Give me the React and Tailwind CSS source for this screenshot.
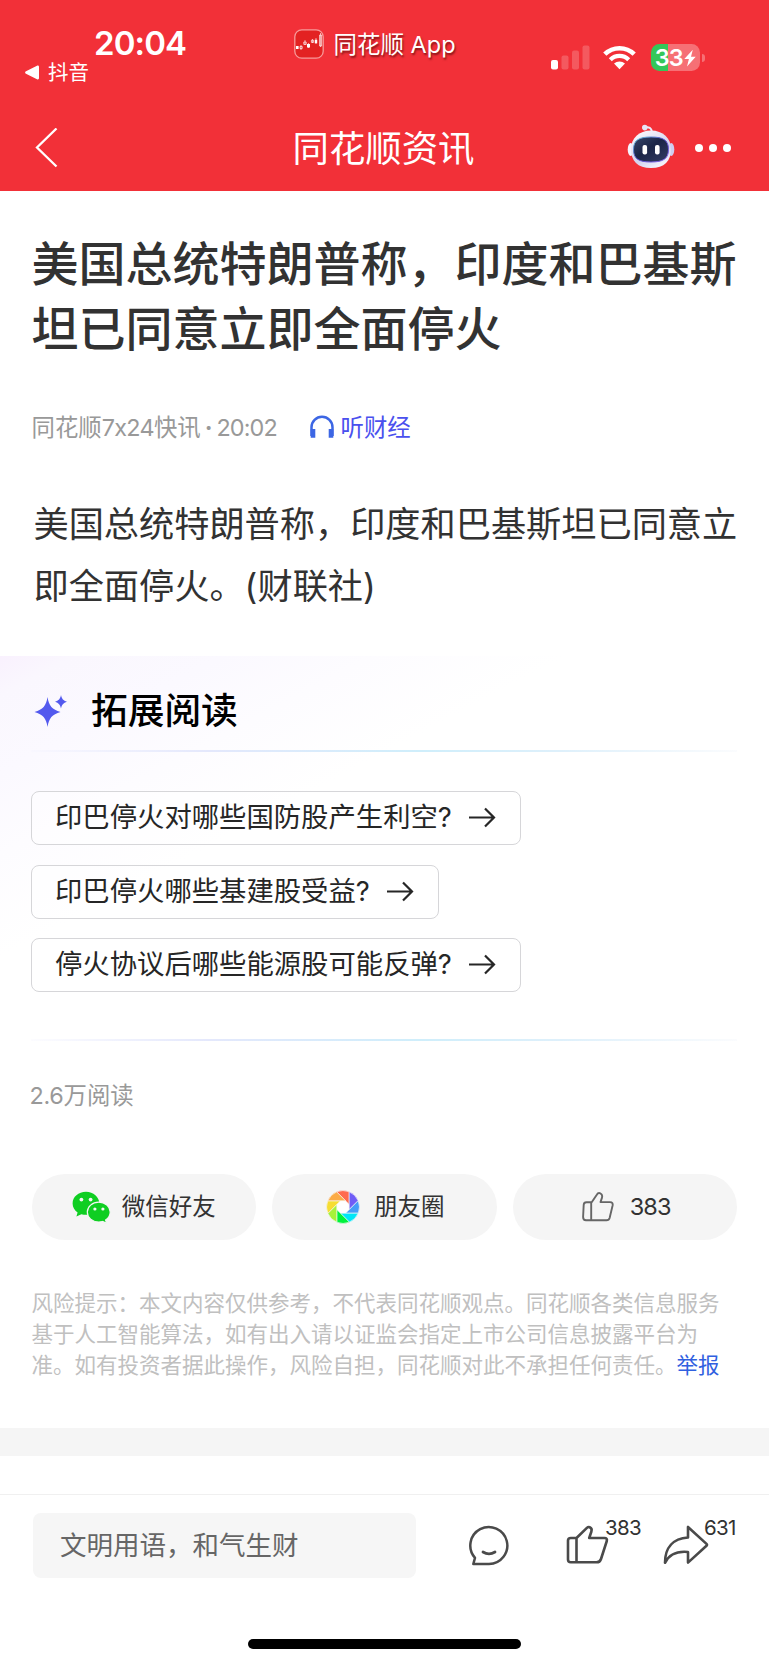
import React from 'react';

const questions = [
  { id: 1, text: '印巴停火对哪些国防股产生利空?' },
  { id: 2, text: '印巴停火哪些基建股受益?' },
  { id: 3, text: '停火协议后哪些能源股可能反弹?' },
];

const apertureBlades = [
  { color: '#ff6b4f', angle: 0 },
  { color: '#6f5cf6', angle: 45 },
  { color: '#459df8', angle: 90 },
  { color: '#00e6f6', angle: 135 },
  { color: '#00f23c', angle: 180 },
  { color: '#a6f23a', angle: 225 },
  { color: '#f6dd33', angle: 270 },
  { color: '#fcab45', angle: 315 },
];

const AppLogo = () => (
  <svg className="h-[30px] w-[30px]" viewBox="0 0 30 30" fill="none">
    <rect x="0.8" y="0.8" width="28.4" height="28.4" rx="7" fill="#e32222" stroke="#f79a9a" strokeWidth="1.3" />
    <path d="M7 16v5M11 11v5M14.5 14v5M18.5 10v4M22 9v6M26.5 4v14" stroke="#fff" strokeWidth="0.6" />
    <path d="M2 17h2.6v3H2zM13 15h3v3.4h-3zM20.8 10.8h2.4v3.4h-2.4z" fill="#fff" />
    <path d="M6 17.4h2.2v2.2H6zM9.8 13h2.4v2.4H9.8zM17.4 11.2h2.2v2.2h-2.2zM25.6 6h2v11h-2z" stroke="#fff" strokeWidth="0.7" />
  </svg>
);

const SignalIcon = () => (
  <svg className="h-[25px] w-[39px]" viewBox="0 0 39 25" fill="#fff">
    <rect x="0" y="15" width="7" height="9.5" rx="2" />
    <rect x="10.5" y="10.5" width="7" height="14" rx="2" opacity="0.2" />
    <rect x="21" y="5.5" width="7" height="19" rx="2" opacity="0.2" />
    <rect x="31.5" y="0.5" width="7" height="24" rx="2" opacity="0.2" />
  </svg>
);

const WifiIcon = () => (
  <svg className="h-[25px] w-[33px]" viewBox="0 0 33 25">
    <path d="M1.8 9.2a21 21 0 0 1 29.4 0" fill="none" stroke="#fff" strokeWidth="4.6" />
    <path d="M7.3 14.7a13.2 13.2 0 0 1 18.4 0" fill="none" stroke="#fff" strokeWidth="4.3" />
    <path d="M11 18.6a8 8 0 0 1 11 0l-5.5 5.6z" fill="#fff" />
  </svg>
);

const Battery = () => (
  <div className="flex items-center">
    <div className="flex h-[27px] w-[48.5px] items-center justify-center overflow-hidden rounded-[8.5px] bg-[linear-gradient(to_right,#34c759_0,#34c759_16.5px,#f67075_16.5px)] text-white">
      <span className="text-[23.5px] font-semibold leading-none tracking-[-1px]">33</span>
      <svg className="ml-[1px] h-[18px] w-[12px]" viewBox="0 0 12 18" fill="#fff">
        <path d="M8.8 0.8L0.3 10h4.6L3 17.4 11.7 7.8H7z" />
      </svg>
    </div>
    <div className="ml-[2px] h-[8px] w-[3px] rounded-r-full bg-[#f67075]" />
  </div>
);

const RobotIcon = () => (
  <svg className="h-[46px] w-[48px]" viewBox="0 0 48 46">
    <defs>
      <linearGradient id="shell" x1="0" y1="0" x2="0.6" y2="1">
        <stop offset="0" stopColor="#ffffff" />
        <stop offset="0.7" stopColor="#d3d2ee" />
        <stop offset="1" stopColor="#f2f1fb" />
      </linearGradient>
      <linearGradient id="visor" x1="0" y1="0" x2="1" y2="1">
        <stop offset="0" stopColor="#37466b" />
        <stop offset="0.45" stopColor="#1b2547" />
        <stop offset="1" stopColor="#343d64" />
      </linearGradient>
      <linearGradient id="rim" x1="0" y1="0" x2="1" y2="1">
        <stop offset="0" stopColor="#6ad2dc" />
        <stop offset="0.5" stopColor="#5346c9" />
        <stop offset="1" stopColor="#8c6cf0" />
      </linearGradient>
    </defs>
    <path d="M18 3.5c4-.8 6.5.2 7 4.5" fill="none" stroke="#eceafa" strokeWidth="2" />
    <circle cx="17.8" cy="3.6" r="2.8" fill="#e6e5f7" />
    <ellipse cx="3.7" cy="25.5" rx="3" ry="6.5" fill="#f5f4ff" />
    <ellipse cx="44.3" cy="25.5" rx="3" ry="6.5" fill="#cfcdf0" />
    <path d="M24 6.5c12 0 20 7.8 20 18.5 0 12-6.5 19-20 19S4 37 4 25C4 14.3 12 6.5 24 6.5z" fill="url(#shell)" />
    <path d="M24 13c12 0 17.5 3 17.5 12.5S36 38 24 38 6.500 35 6.500 25.500 12 13 24 13z" fill="url(#visor)" stroke="url(#rim)" strokeWidth="1" />
    <rect x="15.5" y="21" width="4.6" height="9.5" rx="2" fill="#fff" />
    <rect x="28" y="21" width="4.6" height="9.5" rx="2" fill="#fff" />
  </svg>
);

const WechatIcon = () => (
  <svg className="h-[33px] w-[39px]" viewBox="0 0 39 33">
    <path d="M14 .8C6.400.8.600 6 .600 12.400c0 3.700 1.900 6.900 5 9l-1.200 4.200 5-2.400c1.500.4 3 .6 4.600.6 7.400 0 13.300-5.100 13.300-11.400S21.400.8 14 .8z" fill="#0fce22" />
    <circle cx="9.4" cy="8.6" r="1.9" fill="#f5f5f5" />
    <circle cx="18.6" cy="8.6" r="1.9" fill="#f5f5f5" />
    <path d="M26.800 11.200c-6.500 0-11.500 4.400-11.500 9.900s5 9.900 11.500 9.900c1.300 0 2.600-.2 3.800-.5l4 1.900-1-3.300c2.900-1.900 4.600-4.700 4.600-8 0-5.500-5-9.900-11.400-9.900z" fill="#0fce22" stroke="#f5f5f5" strokeWidth="1.2" />
    <circle cx="22.9" cy="18" r="1.6" fill="#f5f5f5" />
    <circle cx="30.9" cy="18" r="1.6" fill="#f5f5f5" />
  </svg>
);

const MomentsIcon = () => (
  <svg className="h-[34px] w-[34px]" viewBox="-17 -17 34 34">
    <circle r="8" fill="#fff" />
    {apertureBlades.map((blade) => (
      <path
        key={blade.angle}
        d="M6.2 -2.57L6.2 -15.2A16.4 16.4 0 0 0 -6.36 -15.13Z"
        transform={`rotate(${blade.angle})`}
        fill={blade.color}
        stroke="#f7f7f7"
        strokeWidth="0.6"
      />
    ))}
  </svg>
);

const LikeOutline = () => (
  <svg className="h-[30px] w-[32px]" viewBox="0 0 32 30" fill="none" stroke="#666" strokeWidth="1.9" strokeLinejoin="round">
    <path d="M9.7 10.2H4.5c-2 0-2.7 1-2.8 2.5L1.1 25c0 2.3.9 3.300 2.900 3.300h20.500c1.700 0 2.700-.8 3.100-2.300l3-12.500c.4-2.200-.4-3.400-2.500-3.400h-9.600l1.500-4.500c.5-2.200-.2-3.700-1.700-4.300-1.400-.5-2.700 0-3.500 1.400L9.700 10.200zM9.200 10.200v18" />
  </svg>
);

const LikeIcon = () => (
  <svg className="h-[40px] w-[43px]" viewBox="0 0 43 40" fill="none" stroke="#4a4a4a" strokeWidth="2.6" strokeLinejoin="round">
    <path d="M10.500 13H4.800C2.800 13 2 13.900 2 15.600V34.500c0 1.900.9 2.800 2.800 2.800H30.500c2.300 0 3.800-1 4.500-3.300l5.800-18c.5-2-.3-3-2.300-3H23.200l2.200-6.500c.6-2-.2-3.700-1.700-4.300-1-.4-2-.1-2.800.7zM10.500 13v24.300" />
  </svg>
);

const CommentIcon = () => (
  <svg className="h-[42px] w-[42px]" viewBox="0 0 42 42" fill="none" stroke="#4a4a4a" strokeWidth="2.5" strokeLinecap="round" strokeLinejoin="round">
    <path d="M5.300 40l1.700-6.200A18.500 18.500 0 1 1 21 40z" />
    <path d="M15 28q6 3.800 12 0" strokeWidth="2.8" />
  </svg>
);

const ShareIcon = () => (
  <svg className="h-[40px] w-[46px]" viewBox="0 0 46 40" fill="none" stroke="#4a4a4a" strokeWidth="2.6" strokeLinejoin="round">
    <path d="M25 2v10.500C10 13.500 2 22.500 2 37.800c4.500-9 12-11.900 23-10.800v10.600L43.500 20.800c.7-.7.700-1.200 0-1.900z" />
  </svg>
);

const Divider = () => (
  <div className="h-[2px] bg-[linear-gradient(to_right,rgba(240,240,255,0.2),#e4e8fc_25%,#cfeefb_55%,#def0fb_75%,rgba(240,244,250,0.3))]" />
);

const App = () => {
  return (
    <div className="flex h-[1665px] w-[769px] flex-col overflow-hidden bg-white font-['Inter','Noto_Sans_CJK_SC',sans-serif] text-[#323232]">
      {/* Header */}
      <header className="h-[191px] shrink-0 bg-[#f23038] text-white">
        <div className="flex h-[100px] justify-between">
          <div className="w-[200px] pt-[26px]">
            <div className="pl-[94px] text-[33px] font-semibold leading-[34px] tracking-[-0.9px]">20:04</div>
            <div className="flex h-[25px] items-center gap-[8px] pl-[25px]">
              <svg className="h-[15px] w-[15px]" viewBox="0 0 15 15" fill="#fff">
                <path d="M1 6.3L12 .8c1.2-.6 2 0 2 1.2v11c0 1.2-.8 1.8-2 1.2L1 8.7C-.2 8-.2 7 1 6.3z" />
              </svg>
              <span className="text-[20.5px] leading-[25px]">抖音</span>
            </div>
          </div>
          <div className="flex h-[88px] w-[250px] items-center gap-[10px] pl-[43px]">
            <AppLogo />
            <span className="whitespace-nowrap pt-[2px] text-[23.5px] leading-[30px] [text-shadow:1px_2px_2px_rgba(60,0,0,0.6)]">同花顺 App</span>
          </div>
          <div className="flex h-[115px] w-[218px] items-center">
            <SignalIcon />
            <div className="ml-[13px]"><WifiIcon /></div>
            <div className="ml-[15px]"><Battery /></div>
          </div>
        </div>
        <div className="flex h-[91px] items-center pl-[35px] pr-[38px] pt-[5px]">
          <div className="flex w-[200px] items-center">
            <svg className="h-[40px] w-[23px]" viewBox="0 0 23 40" fill="none" stroke="#fff" strokeWidth="2.3">
              <path d="M21.5 0.500L2 19.500 21.5 38.500" />
            </svg>
          </div>
          <h1 className="flex-1 pl-[1px] pt-[2px] text-center text-[36.4px] leading-[50px]">同花顺资讯</h1>
          <div className="flex w-[200px] items-center justify-end gap-[20px]">
            <div className="-mt-[3px]"><RobotIcon /></div>
            <div className="flex gap-[6px]">
              <span className="h-[8px] w-[8px] rounded-full bg-white" />
              <span className="h-[8px] w-[8px] rounded-full bg-white" />
              <span className="h-[8px] w-[8px] rounded-full bg-white" />
            </div>
          </div>
        </div>
      </header>

      {/* Article */}
      <article className="h-[465px] shrink-0 pl-[31.5px] pt-[40px]">
        <h2 className="whitespace-nowrap text-[47px] font-medium leading-[65px]">
          美国总统特朗普称，印度和巴基斯<br />坦已同意立即全面停火
        </h2>
        <div className="mt-[51px] flex h-[32px] items-center text-[23.4px] leading-[32px] text-[#999]">
          <div className="flex w-[277px] items-center whitespace-nowrap">
            <span>同花顺</span>
            <span className="tracking-[-0.7px]">7x24</span>
            <span>快讯</span>
            <span className="mx-[4px] font-bold">·</span>
            <span className="tracking-[-0.9px]">20:02</span>
          </div>
          <svg className="-mt-[2px] h-[24px] w-[26px]" viewBox="0 0 26 24" fill="none" stroke="#3c66e4">
            <path d="M2.5 21V12.3a10.5 10.5 0 0 1 21 0V21" strokeWidth="2.5" />
            <path d="M4 14v8.8M22 14v8.8" strokeWidth="4.6" />
          </svg>
          <span className="ml-[6px] text-[#4a50ee]">听财经</span>
        </div>
        <p className="mt-[49px] whitespace-nowrap pl-[2px] text-[35.2px] leading-[62px]">
          美国总统特朗普称，印度和巴基斯坦已同意立<br />即全面停火。(财联社)
        </p>
      </article>

      {/* Further reading */}
      <section className="h-[385px] shrink-0 bg-[linear-gradient(152deg,#f9f1fe_0,#faf7fe_5%,#fbf9ff_15%,#fdfcff_25%,#ffffff_38%)] pl-[31px] pr-[32px]">
        <div className="flex h-[94px] items-center pt-[14px]">
          <svg className="h-[33px] w-[36px]" viewBox="0 0 36 33" fill="#5359ee">
            <path d="M16.5 3c1.5 9 4.5 12.500 13 15-8.500 2.500-11.500 6-13 15C15 24 12 20.500 3.500 18 12 15.500 15 12 16.500 3z" />
            <path d="M30 1c.8 4 2.300 5.500 6 6.700-3.700 1.300-5.200 2.800-6 6.800-.8-4-2.300-5.500-6-6.800C27.700 6.500 29.200 5 30 1z" />
          </svg>
          <h3 className="ml-[24px] pt-[1px] text-[36.7px] font-medium leading-[48px] text-black">拓展阅读</h3>
        </div>
        <Divider />
        <div className="flex flex-col items-start gap-[19.5px] pb-[47px] pt-[39px]">
          {questions.map((question) => (
            <button
              key={question.id}
              className="flex h-[54px] items-center gap-[16px] whitespace-nowrap rounded-[8px] border border-[#d6d6d9] bg-white/40 pl-[23px] pr-[24px] text-[27.35px] leading-[40px] text-[#262626]"
            >
              {question.text}
              <svg className="h-[22px] w-[28px]" viewBox="0 0 28 22" fill="none" stroke="#262626" strokeWidth="2.2">
                <path d="M1 10.5h25M17 1.5l9 9-9 9" />
              </svg>
            </button>
          ))}
        </div>
        <Divider />
      </section>

      {/* Read count */}
      <div className="h-[133px] shrink-0 pl-[29.5px] pt-[39px] text-[23.4px] leading-[32px] text-[#999]">
        <span className="tracking-[-0.3px]">2.6</span>万阅读
      </div>

      {/* Share buttons */}
      <div className="grid h-[66px] shrink-0 grid-cols-3 gap-[16px] pl-[31.5px] pr-[32px] text-[23.5px]">
        <button className="flex items-center justify-center gap-[11px] rounded-full bg-[#f5f5f5]">
          <WechatIcon />
          微信好友
        </button>
        <button className="flex items-center justify-center gap-[14px] rounded-full bg-[#f5f5f5] pl-[2px]">
          <MomentsIcon />
          朋友圈
        </button>
        <button className="flex items-center justify-center gap-[16px] rounded-full bg-[#f5f5f5] pl-[3px]">
          <LikeOutline />
          <span className="tracking-[-0.8px]">383</span>
        </button>
      </div>

      {/* Risk notice */}
      <p className="h-[188px] shrink-0 whitespace-nowrap pl-[31.5px] pt-[47.5px] text-[21.5px] leading-[31.3px] text-[#c0c0c0]">
        风险提示：本文内容仅供参考，不代表同花顺观点。同花顺各类信息服务<br />
        基于人工智能算法，如有出入请以证监会指定上市公司信息披露平台为<br />
        准。如有投资者据此操作，风险自担，同花顺对此不承担任何责任。<a className="text-[#3060e0]">举报</a>
      </p>
      <div className="h-[28px] shrink-0 bg-[#f5f5f5]" />

      {/* Comment bar */}
      <footer className="mt-[38px] flex h-[171px] shrink-0 flex-col border-t border-[#f0f0f0]">
        <div className="flex h-[100px] items-center pl-[33px]">
          <div className="flex h-[65px] w-[383px] items-center rounded-[8px] bg-[#f6f6f6] pl-[27px] pt-[2px] text-[26.5px] text-[#666]">
            文明用语，和气生财
          </div>
          <div className="ml-[52px]"><CommentIcon /></div>
          <div className="relative ml-[56px]">
            <LikeIcon />
            <span className="absolute left-[39px] top-[-9px] text-[20.5px] leading-[24px] tracking-[-0.7px]">383</span>
          </div>
          <div className="relative ml-[54px]">
            <ShareIcon />
            <span className="absolute left-[41px] top-[-9px] text-[20.5px] leading-[24px] tracking-[-0.7px]">631</span>
          </div>
        </div>
        <div className="ml-[247.5px] mt-[44px] h-[10px] w-[273.5px] rounded-full bg-black" />
      </footer>
    </div>
  );
};

export default App;
